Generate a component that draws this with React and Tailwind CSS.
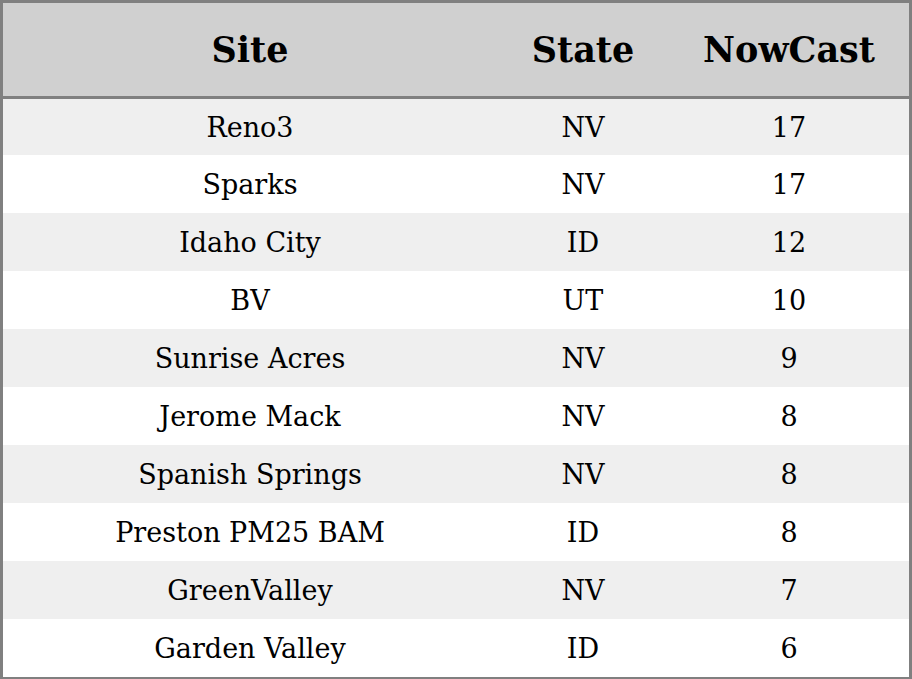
const rows = [
  { site: 'Reno3', state: 'NV', nowcast: 17 },
  { site: 'Sparks', state: 'NV', nowcast: 17 },
  { site: 'Idaho City', state: 'ID', nowcast: 12 },
  { site: 'BV', state: 'UT', nowcast: 10 },
  { site: 'Sunrise Acres', state: 'NV', nowcast: 9 },
  { site: 'Jerome Mack', state: 'NV', nowcast: 8 },
  { site: 'Spanish Springs', state: 'NV', nowcast: 8 },
  { site: 'Preston PM25 BAM', state: 'ID', nowcast: 8 },
  { site: 'GreenValley', state: 'NV', nowcast: 7 },
  { site: 'Garden Valley', state: 'ID', nowcast: 6 },
]

export default function App() {
  return (
    <div className="w-[912px] h-[679px] overflow-hidden bg-white font-['DejaVu_Serif',serif] text-black">
      <div className="h-full border-[3px] border-[#808080] flex flex-col">
        {/* Header */}
        <div className="flex h-[96px] shrink-0 bg-[#d0d0d0] border-b-[3px] border-[#808080] items-center text-[35px] leading-none font-bold">
          <div className="w-[494px] text-center">Site</div>
          <div className="w-[172px] text-center">State</div>
          <div className="flex-1 text-center">NowCast</div>
        </div>

        {/* Rows */}
        {rows.map((row, i) => (
          <div
            key={row.site}
            className={`flex items-center shrink-0 text-[27px] leading-none ${i === 0 ? 'h-[56px]' : 'h-[58px]'} ${i % 2 === 0 ? 'bg-[#efefef]' : 'bg-white'}`}
          >
            <div className="w-[494px] text-center">{row.site}</div>
            <div className="w-[172px] text-center">{row.state}</div>
            <div className="flex-1 text-center">{row.nowcast}</div>
          </div>
        ))}
      </div>
    </div>
  )
}
